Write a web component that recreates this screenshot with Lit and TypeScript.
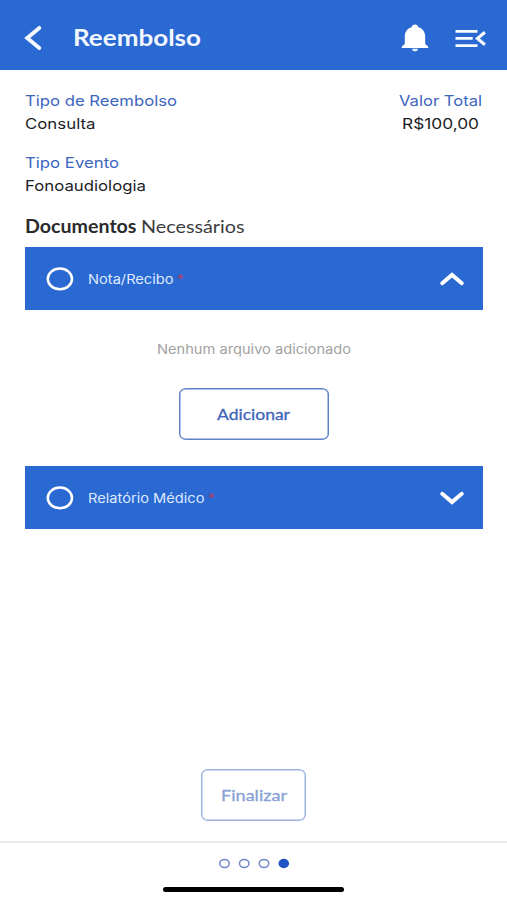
import { LitElement, html, css } from "lit";
import { customElement, property, state } from "lit/decorators.js";

/** A single line of text stretched horizontally to an exact width. */
@customElement("wide-text")
class WideText extends LitElement {
  @property({ type: Number }) width = 100;
  @property() text = "";
  @state() private ratio = 1;

  static styles = css`
    :host { display: block; white-space: nowrap; flex: none; text-align: left; }
    .glyphs { display: inline-block; transform-origin: left center; white-space: pre; vertical-align: top; }
  `;

  async firstUpdated() {
    await document.fonts.ready;
    const el = this.renderRoot.querySelector(".glyphs") as HTMLElement;
    const natural = parseFloat(getComputedStyle(el).width);
    if (natural > 0) this.ratio = this.width / natural;
  }

  render() {
    return html`<style>:host { width: ${this.width}px; }</style
      ><span class="glyphs" style="transform: scaleX(${this.ratio})">${this.text}</span>`;
  }
}

@customElement("document-bar")
class DocumentBar extends LitElement {
  @property() label = "";
  @property({ type: Number }) labelWidth = 80;
  @property({ type: Boolean }) open = false;

  static styles = css`
    :host { display: block; }
    .bar {
      box-sizing: border-box; height: 63px; display: flex; align-items: center;
      padding: 0 17.5px 0 20.5px; background: #2a68d2; color: #dfeaff;
      font: 13px/20px Inter, sans-serif;
    }
    .ring { width: 28px; height: 24px; flex: none; }
    .label { margin-left: 14px; margin-top: 1px; }
    .star { margin-left: 4px; margin-top: 1px; color: #b23f68; }
    .chevron { width: 26px; height: 16px; margin-left: auto; }
  `;

  render() {
    const d = this.open ? "M3.2 12.2 13 3.9 22.8 12.2" : "M3.2 3.8 13 12.1 22.8 3.8";
    return html`<div class="bar">
      <svg class="ring" viewBox="0 0 28 24"><ellipse cx="13.9" cy="11.9" rx="12.1" ry="10.3" fill="none" stroke="#fff" stroke-width="2.5" /></svg>
      <wide-text class="label" .text=${this.label} .width=${this.labelWidth}></wide-text>
      <wide-text class="star" .text=${"*"} .width=${7}></wide-text>
      <svg class="chevron" viewBox="0 0 26 16"><path d=${d} fill="none" stroke="#fff" stroke-width="3.9" stroke-linecap="round" stroke-linejoin="miter" /></svg>
    </div>`;
  }
}

@customElement("app-root")
class AppRoot extends LitElement {
  static styles = css`
    :host { display: block; height: 900px; overflow: hidden; background: #fff; }
    .screen { height: 900px; display: flex; flex-direction: column; }
    header {
      box-sizing: border-box; height: 70px; flex: none; display: flex; align-items: center;
      padding: 5px 20px 0 22px; background: #2a68d2; color: #f1f7ff;
    }
    .back { width: 22px; height: 28px; margin-top: 1px; }
    .title { margin-left: 28.5px; font: 700 22px/28px Lato, sans-serif; }
    .bell { width: 28px; height: 30px; margin-left: auto; }
    .menu { width: 34px; height: 24px; margin-left: 24.5px; margin-top: 2px; }
    main { flex: 1; display: flex; flex-direction: column; padding: 20px 24.5px 0 25px; }
    .info { display: flex; justify-content: space-between; font: 14.7px/23px Inter, sans-serif; color: #1d1d1f; }
    .key { color: #3c65bd; }
    .total { display: flex; flex-direction: column; align-items: center; margin-right: 0.5px; }
    .second { margin-top: 16px; }
    .heading { display: flex; gap: 4px; margin-top: 16px; height: 33px; font: 18px/24px Lato, sans-serif; color: #3b3b3e; }
    .strong { font-weight: 700; color: #2b2b2d; }
    .panel { height: 156px; display: flex; flex-direction: column; align-items: center; }
    .empty { margin-top: 29px; font: 13px/20px Inter, sans-serif; color: #a2a2a2; }
    .button {
      box-sizing: border-box; height: 52px; display: flex; align-items: center; justify-content: center;
      background: #fff; border: 1px solid #5d82c8; box-shadow: inset 0 0 0 0.5px #5d82c8;
      border-radius: 7px / 6px; padding: 0; font: 15px/20px Lato, sans-serif; color: #3f66ba;
    }
    .add { width: 150px; margin-top: 29px; -webkit-text-stroke: 0.3px #3f66ba; }
    .finish {
      width: 105px; margin: auto auto 20px; border-color: #9db4e0; box-shadow: inset 0 0 0 0.5px #9db4e0;
      color: #88a2d6; -webkit-text-stroke: 0.3px #88a2d6;
    }
    footer {
      box-sizing: border-box; height: 59px; flex: none; display: flex; flex-direction: column;
      align-items: center; border-top: 2px solid #e9e9e9;
    }
    .dots { display: flex; margin-top: 15px; }
    .dots svg { width: 72px; height: 11px; }
    .home { width: 181px; height: 5.5px; margin: 17.5px 0 0 0.5px; border-radius: 3px; background: #000; }
  `;

  private line(text: string, width: number, cls = "") {
    return html`<wide-text class=${cls} .text=${text} .width=${width}></wide-text>`;
  }

  render() {
    return html`<div class="screen">
      <header>
        <svg class="back" viewBox="0 0 22 28"><path d="M17.3 3.9 5.2 14 17.3 24.1" fill="none" stroke="#f4f9ff" stroke-width="3.9" stroke-linecap="round" /></svg>
        ${this.line("Reembolso", 128, "title")}
        <svg class="bell" viewBox="0 0 28 30">
          <path fill="#fff" d="M14 1.6c1.8 0 3.1 1.1 3.4 2.7 4.4 1.3 6.8 4.8 6.8 9.3v7.3l3 2.7v1.3H.8v-1.3l3-2.7v-7.3c0-4.5 2.4-8 6.8-9.3.3-1.6 1.6-2.7 3.4-2.7z" />
          <path fill="#e4eeff" d="M10.9 25.7h6.2c-.2 1.6-1.5 2.6-3.1 2.6s-2.9-1-3.1-2.6z" />
        </svg>
        <svg class="menu" viewBox="0 0 34 24">
          <path fill="none" stroke="#f8fbff" stroke-width="2.8" d="M2.5 4.3H24.5M2.5 11.4H19.7M2.5 18.6H24.5" />
          <path fill="none" stroke="#f8fbff" stroke-width="3.1" d="M31.9 5.2 24.4 11.5 31.9 17.8" />
        </svg>
      </header>
      <main>
        <section class="info">
          <div>${this.line("Tipo de Reembolso", 152, "key")}${this.line("Consulta", 70.5)}</div>
          <div class="total">${this.line("Valor Total", 83, "key")}${this.line("R$100,00", 77)}</div>
        </section>
        <section class="info second">
          <div>${this.line("Tipo Evento", 94, "key")}${this.line("Fonoaudiologia", 121)}</div>
        </section>
        <div class="heading">${this.line("Documentos", 111.5, "strong")}${this.line("Necessários", 103.5)}</div>
        <document-bar label="Nota/Recibo" .labelWidth=${85.5} open></document-bar>
        <div class="panel">
          ${this.line("Nenhum arquivo adicionado", 194, "empty")}
          <button class="button add">${this.line("Adicionar", 73)}</button>
        </div>
        <document-bar label="Relatório Médico" .labelWidth=${116.5}></document-bar>
        <button class="button finish" disabled>${this.line("Finalizar", 66)}</button>
      </main>
      <footer>
        <div class="dots">
          <svg viewBox="0 0 72 11">
            <g fill="none" stroke="#7185c8" stroke-width="1.5">
              <ellipse cx="6.5" cy="5.5" rx="4.7" ry="4" />
              <ellipse cx="26.2" cy="5.5" rx="4.7" ry="4" />
              <ellipse cx="46" cy="5.5" rx="4.7" ry="4" />
            </g>
            <ellipse cx="65.8" cy="5.5" rx="5.3" ry="4.7" fill="#2253c4" />
          </svg>
        </div>
        <div class="home"></div>
      </footer>
    </div>`;
  }
}
